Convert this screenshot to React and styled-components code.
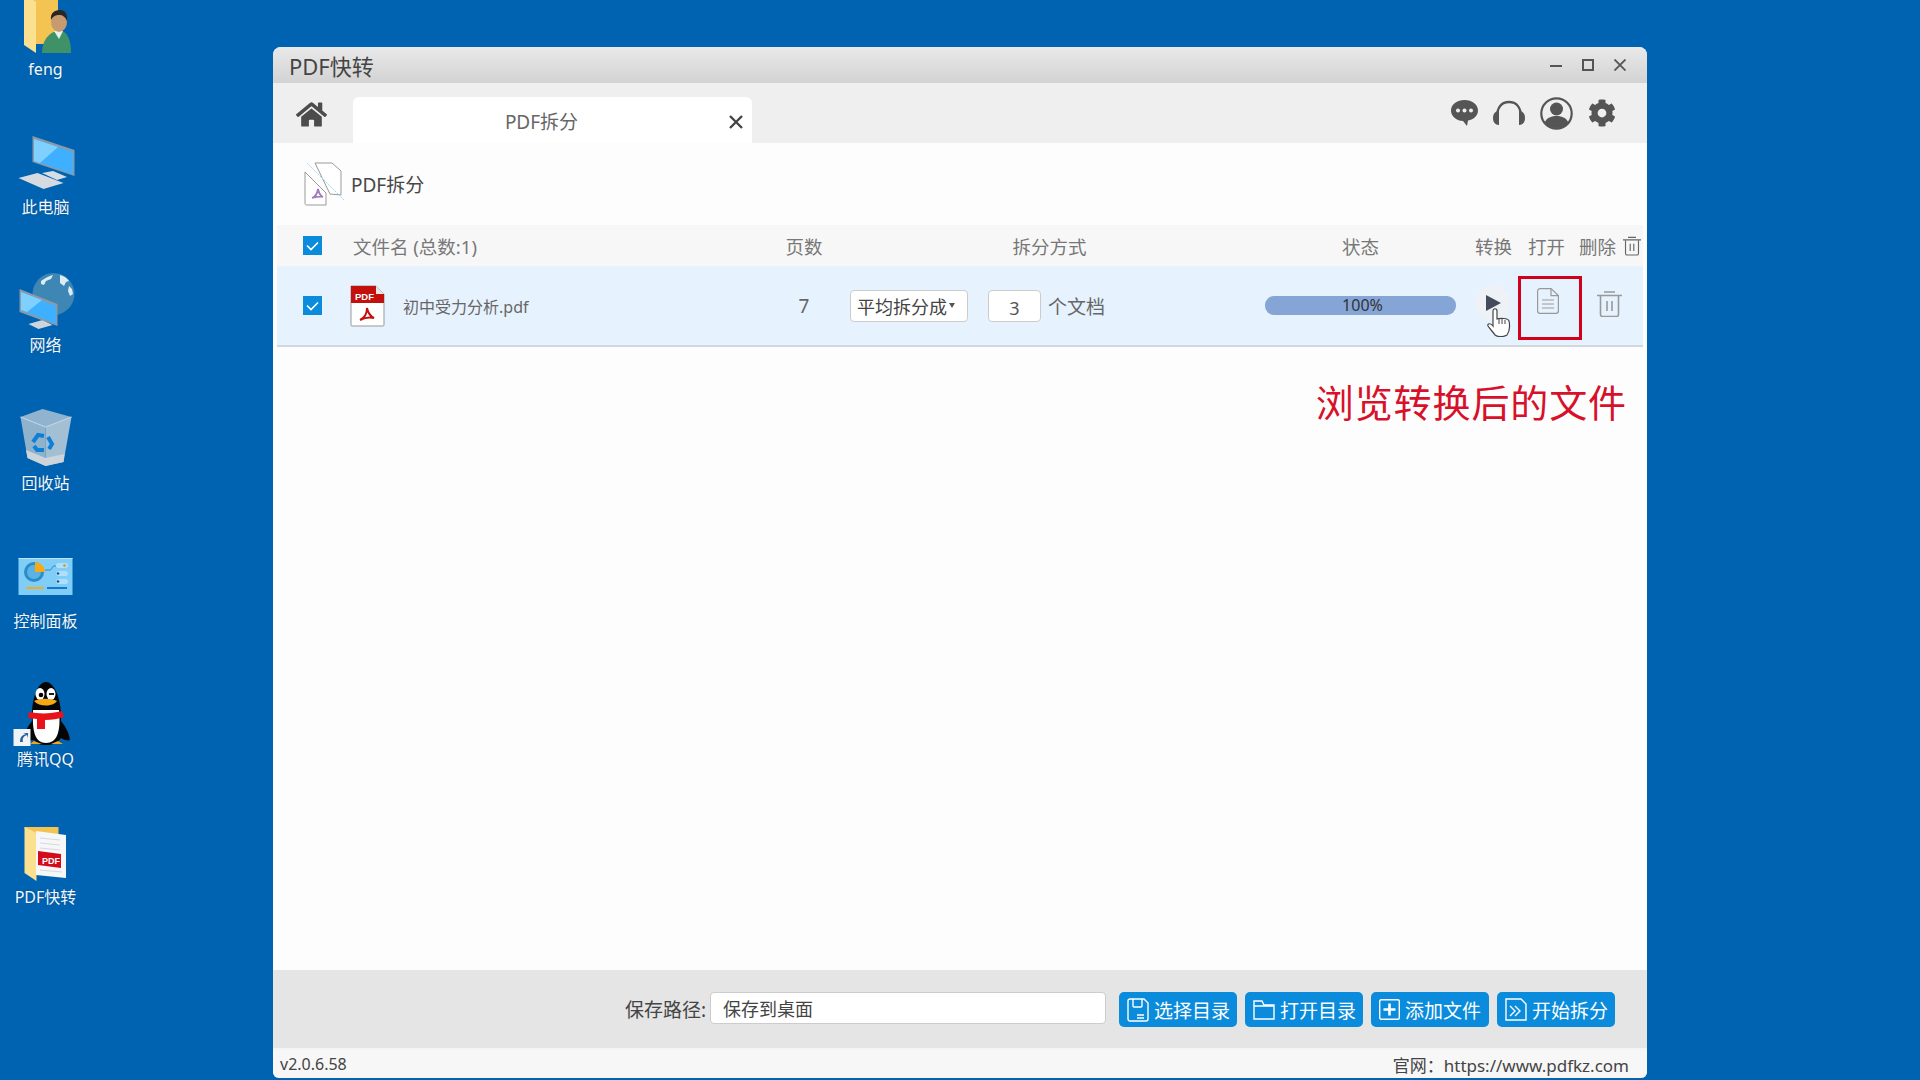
import React from 'react'
import styled, { createGlobalStyle } from 'styled-components'
import { FaHome, FaCog } from 'react-icons/fa'

const FONT = '"Noto Sans", "Noto Sans CJK SC", sans-serif'

const GlobalStyle = createGlobalStyle`
  html, body { margin: 0; padding: 0; }
  body { font-family: ${FONT}; background: #0063b1; }
  * { box-sizing: border-box; }
`

const Desktop = styled.div`
  display: flex;
  align-items: flex-start;
  width: 1920px;
  height: 1080px;
  overflow: hidden;
  background: #0063b1;
`
const IconColumn = styled.div`
  display: flex;
  flex-direction: column;
  flex: none;
  width: 91px;
  margin-top: -2px;
`
const DesktopItem = styled.div`
  display: flex;
  flex-direction: column;
  align-items: center;
  height: 138px;
  svg { display: block; overflow: visible; }
`
const DesktopLabel = styled.div`
  height: 22px;
  line-height: 22px;
  font-size: 16px;
  color: #f2f8ff;
  white-space: nowrap;
  text-shadow: 0 0 2px rgba(0, 0, 0, 0.25);
`

const Window = styled.div`
  display: flex;
  flex-direction: column;
  flex: none;
  width: 1374px;
  height: 1031px;
  margin: 47px 0 0 182px;
  border-radius: 8px 8px 6px 6px;
  overflow: hidden;
  background: #fdfdfe;
  box-shadow: inset 0 -1px 0 #5d86b5;
`
const TitleBar = styled.div`
  display: flex;
  align-items: center;
  justify-content: space-between;
  flex: none;
  height: 36px;
  padding: 0 21px 1px 16px;
  background: linear-gradient(#e9e9e9, #d3d3d3);
`
const TitleText = styled.div`
  font-size: 22px;
  color: #444;
`
const WinControls = styled.div`
  display: flex;
  align-items: center;
  gap: 20px;
  svg { display: block; }
`
const TabBar = styled.div`
  display: flex;
  align-items: flex-end;
  flex: none;
  height: 60px;
  padding-left: 25px;
  background: #efefef;
`
const HomeButton = styled.div`
  display: flex;
  align-items: center;
  width: 55px;
  height: 46px;
  margin-bottom: 6px;
  margin-left: -2px;
  margin-right: 2px;
  color: #4c4c4c;
  font-size: 31px;
`
const Tab = styled.div`
  position: relative;
  display: flex;
  align-items: center;
  justify-content: center;
  width: 399px;
  height: 46px;
  padding: 2px 22px 0 0;
  border-radius: 6px 6px 0 0;
  background: #fff;
  font-size: 19px;
  color: #666;
`
const TabClose = styled.svg`
  position: absolute;
  right: 9px;
  top: 18px;
`
const Tools = styled.div`
  display: flex;
  align-items: center;
  gap: 15px;
  height: 60px;
  margin-left: auto;
  margin-right: 31px;
  color: #555;
  svg { display: block; }
`
const Heading = styled.div`
  display: flex;
  align-items: center;
  flex: none;
  gap: 6px;
  height: 82px;
  padding: 0 0 0 31px;
  font-size: 19px;
  color: #484848;
`
const Table = styled.div`
  display: flex;
  flex-direction: column;
  flex: none;
  margin: 0 4px;
`
const TableRow = styled.div`
  display: grid;
  grid-template-columns: 76px 421px 60px 431px 191px 1fr;
  align-items: center;
  height: ${props => props.$height}px;
  background: ${props => props.$background};
  border-bottom: ${props => props.$line ? '2px solid #d3d8de' : 'none'};
`
const CheckCell = styled.div`
  display: flex;
  padding-left: 26px;
`
const HeadCell = styled.div`
  font-size: 18.5px;
  color: #777;
  text-align: ${props => props.$align || 'left'};
  white-space: nowrap;
`
const HeadActions = styled.div`
  display: flex;
  align-items: center;
  padding-left: 19px;
  font-size: 18.5px;
  color: #777;
`
const HeadAction = styled.span`
  flex: none;
  width: ${props => props.$width}px;
`
const NameCell = styled.div`
  display: flex;
  align-items: center;
  gap: 18px;
  padding-left: 0;
  margin-left: -3px;
  font-size: 16px;
  color: #666;
`
const PageCount = styled.div`
  font-size: 19px;
  color: #666;
  text-align: center;
`
const MethodCell = styled.div`
  display: flex;
  align-items: center;
  padding-left: 16px;
`
const SelectBox = styled.div`
  display: flex;
  align-items: center;
  width: 118px;
  height: 32px;
  padding-left: 6px;
  border: 1px solid #ccc;
  border-radius: 4px;
  background: #fff;
  font-size: 18px;
  color: #444;
  white-space: nowrap;
`
const Caret = styled.span`
  width: 0;
  height: 0;
  margin-left: 2px;
  border-left: 3px solid transparent;
  border-right: 3px solid transparent;
  border-top: 5px solid #555;
`
const CountInput = styled.div`
  width: 53px;
  height: 32px;
  margin-left: 20px;
  border: 1px solid #ccc;
  border-radius: 4px;
  background: #fff;
  font-size: 18px;
  line-height: 34px;
  text-align: center;
  color: #555;
`
const CountUnit = styled.span`
  margin-left: 7px;
  font-size: 19px;
  color: #666;
`
const Progress = styled.div`
  width: 191px;
  height: 19px;
  margin-top: -1px;
  padding-left: 4px;
  border-radius: 9px;
  background: #84a5d6;
  font-size: 16px;
  line-height: 18px;
  text-align: center;
  color: #333;
`
const RowActions = styled.div`
  display: flex;
  align-items: center;
  padding-left: 19px;
`
const PlayButton = styled.div`
  position: relative;
  display: flex;
  align-items: center;
  justify-content: center;
  flex: none;
  width: 36px;
  height: 36px;
  margin: -6px 7px 0 0;
  border-radius: 50%;
  background: #eef1f5;
`
const Pointer = styled.svg`
  position: absolute;
  left: 12px;
  top: 23px;
`
const OpenButton = styled.div`
  display: flex;
  justify-content: center;
  flex: none;
  width: 64px;
  height: 64px;
  margin-top: 5px;
  padding: 9px 5px 0 0;
  border: 3px solid #d0021b;
`
const TrashButton = styled.div`
  flex: none;
  margin: -3px 0 0 15px;
  svg { display: block; }
`
const Body = styled.div`
  flex: 1;
  padding: 28px 20px 0 0;
  font-size: 38px;
  line-height: 54px;
  text-align: right;
  letter-spacing: 0.9px;
  color: #d8112a;
`
const Footer = styled.div`
  display: flex;
  align-items: flex-start;
  justify-content: flex-end;
  flex: none;
  height: 80px;
  padding: 22px 32px 0 0;
  background: #e5e5e5;
  border-bottom: 2px solid #f4f4f4;
`
const PathLabel = styled.div`
  height: 32px;
  margin-right: 4px;
  font-size: 19px;
  line-height: 36px;
  color: #444;
  white-space: nowrap;
`
const PathInput = styled.div`
  width: 396px;
  height: 32px;
  margin-right: 13px;
  padding-left: 12px;
  border: 1px solid #ccc;
  border-radius: 4px;
  background: #fff;
  font-size: 18px;
  line-height: 32px;
  color: #444;
`
const ActionButton = styled.div`
  display: flex;
  align-items: center;
  gap: 5px;
  width: 118px;
  height: 35px;
  margin-left: ${props => props.$first ? 0 : 8}px;
  padding-left: 8px;
  border-radius: 5px;
  background: #0a8bdc;
  font-size: 19px;
  color: #fff;
  white-space: nowrap;
  svg { display: block; flex: none; }
`
const StatusBar = styled.div`
  display: flex;
  align-items: center;
  justify-content: space-between;
  flex: none;
  height: 28px;
  padding: 0 18px 0 7px;
  background: #f7f7f7;
  font-size: 16px;
  color: #444;
`
const SiteLink = styled.span`
  font-size: 17px;
`

const FengIcon = () => (
  <svg width="64" height="60" viewBox="0 0 64 60">
    <path d="M10 -4h34v50H22z" fill="#f3c452" />
    <path d="M10 -4l12 8v51l-12-8z" fill="#fbe08f" />
    <path d="M28 55c0-14 8-20 14-22h6c6 2 9 10 9 22z" fill="#3f9168" />
    <path d="M40 33l5 8 4-8z" fill="#e8f2ea" />
    <ellipse cx="45" cy="24" rx="8" ry="10" fill="#c89a70" />
    <path d="M37 22c-1-8 5-10 9-10s8 3 7 11c-2-5-5-6-8-6s-6 1-8 5z" fill="#2b2623" />
  </svg>
)
const ComputerIcon = () => (
  <svg width="64" height="60" viewBox="0 0 64 60">
    <polygon points="28,37 39,35 53,41 43,44" fill="#d6dde3" />
    <polygon points="18.5,0 60.5,14 60.5,40 18.5,26" fill="#8a9aa8" />
    <polygon points="20,3 59,16 59,38 20,25" fill="#3fb0ff" />
    <polygon points="20,3 44,11 26,27 20,25" fill="#7fd0ff" />
    <polygon points="4.5,42 23.5,37 49.5,47 29.5,53" fill="#d5dbe0" />
  </svg>
)
const NetworkIcon = () => (
  <svg width="64" height="60" viewBox="0 0 64 60">
    <circle cx="39.5" cy="20" r="21" fill="#3e86b4" />
    <path d="M27 7c4-3 8-5 12-6l-2 4-5 2-2 4-3-1zM46 1c4 1 7 3 9 6l-3 1-2 4-4-3zM55 12l3 3 1 5-3 2-2-5z" fill="#dcecf6" />
    <polygon points="14.5,50 28.5,46 38.5,51 24.5,55" fill="#ccd5dc" />
    <polygon points="5.5,15 43.5,30 43.5,52 5.5,38" fill="#8a9aa8" />
    <polygon points="7,18 42,32 42,50 7,36" fill="#3fb0ff" />
    <polygon points="7,18 28,26 13,38 7,36" fill="#7fd0ff" />
  </svg>
)
const RecycleIcon = () => (
  <svg width="64" height="60" viewBox="0 0 64 60">
    <polygon points="6.5,5 28.5,-3 57.5,5 31.5,15" fill="#90b4d0" />
    <polygon points="6.5,5 31.5,15 31.5,54 13.5,46" fill="#8fb2cd" />
    <polygon points="57.5,5 31.5,15 31.5,54 49.5,50" fill="#a3bfd4" />
    <polygon points="12,38 31.5,46 50.5,42 49.5,50 31.5,54 13.5,46" fill="#cdd4da" />
    <path d="M6.5 5L31.5 15L57.5 5" fill="none" stroke="#c9dcea" strokeWidth="1" />
    <g fill="none" stroke="#0f7fd6" strokeWidth="4">
      <path d="M19 30l5-7 6 1" />
      <path d="M34 25l4 7-3 5" />
      <path d="M30 38h-7l-3-4" />
    </g>
  </svg>
)
const PanelIcon = () => (
  <svg width="64" height="60" viewBox="0 0 64 60">
    <rect x="4.5" y="8" width="54" height="37" fill="#80cdf8" />
    <rect x="4.5" y="8" width="54" height="1" fill="#b7e4fc" />
    <circle cx="20" cy="22" r="10" fill="#2b8cc8" />
    <circle cx="20" cy="22" r="7" fill="#5cb2e4" />
    <path d="M21 12a10 10 0 0 1 10 10H21z" fill="#f6ab14" />
    <path d="M31 20h5c2 0 2-4 4-4h4" fill="none" stroke="#2b8cc8" strokeWidth="1" />
    <rect x="42" y="13" width="12" height="5" rx="2.5" fill="#aee0fb" />
    <rect x="42" y="21" width="12" height="5" rx="2.5" fill="#aee0fb" />
    <rect x="42" y="29" width="12" height="5" rx="2.5" fill="#aee0fb" />
    <circle cx="50.5" cy="15.5" r="1.3" fill="#e98a1c" />
    <circle cx="44" cy="23.5" r="1.3" fill="#12588f" />
    <circle cx="44" cy="31.5" r="1.3" fill="#12588f" />
    <rect x="12" y="37" width="18" height="2" fill="#f0ad1e" />
    <rect x="33" y="37" width="20" height="2" fill="#1278c8" />
  </svg>
)
const QQIcon = () => (
  <svg width="64" height="60" viewBox="0 0 64 60">
    <path d="M20 52c-5 1-9 0-10-1 1-8 4-13 8-18-1-20 5-39 14-39s16 19 15 39c4 5 8 11 9 19-2 1-6 0-9-2-4 6-9 7-15 7s-9-1-12-5z" fill="#050505" />
    <path d="M19 22c-1 22 2 33 13 33s15-11 13-33z" fill="#fff" />
    <path d="M20 53l-4 3h12zM44 53l5 3H37z" fill="#f2a614" />
    <ellipse cx="26" cy="6" rx="4.5" ry="6" fill="#fff" />
    <ellipse cx="37" cy="6" rx="4.5" ry="6" fill="#fff" />
    <circle cx="27" cy="7" r="2.3" fill="#000" />
    <path d="M35 6h5" stroke="#000" strokeWidth="1.8" />
    <path d="M20 13c6-3 17-3 23 0-4 6-18 6-23 0z" fill="#f4a914" />
    <path d="M15 24c10 2 22 2 33-1l2 6c-6 2-12 3-19 3v9h-8v-10l-9-1z" fill="#e8121a" />
    <rect x="-0.5" y="41" width="17" height="17" fill="#eef3f8" />
    <path d="M6 54c0-5 2-7 6-8l-3-1h5v5l-1-3c-3 1-5 3-4 7z" fill="#2a5e9e" />
  </svg>
)
const PdfFolderIcon = () => (
  <svg width="64" height="60" viewBox="0 0 64 60">
    <path d="M10.5 1h34v44h-26z" fill="#f3c452" />
    <path d="M10.5 1l12 6v48l-12-8z" fill="#fbe08f" />
    <polygon points="22,5 52,9 52,52 22,49" fill="#f6f7f8" />
    <g stroke="#d6d9dc" strokeWidth="1">
      <path d="M26 12l20 2M26 17l20 2M26 22l20 2M26 44l22 2" />
    </g>
    <polygon points="24,25 47,28 47,42 24,39" fill="#d40b1c" />
    <text x="28" y="38" fontFamily="Liberation Sans, sans-serif" fontSize="9" fontWeight="700" fill="#fff">PDF</text>
  </svg>
)

const desktopItems = [
  { label: 'feng', Icon: FengIcon },
  { label: '此电脑', Icon: ComputerIcon },
  { label: '网络', Icon: NetworkIcon },
  { label: '回收站', Icon: RecycleIcon },
  { label: '控制面板', Icon: PanelIcon },
  { label: '腾讯QQ', Icon: QQIcon },
  { label: 'PDF快转', Icon: PdfFolderIcon },
]

const CheckBox = () => (
  <svg width="19" height="19" viewBox="0 0 19 19">
    <rect width="19" height="19" fill="#0a8bdc" />
    <path d="M4 9.500l4 4 7-7" fill="none" stroke="#fff" strokeWidth="1.600" />
  </svg>
)
const ChatIcon = () => (
  <svg width="27" height="28" viewBox="0 0 27 28">
    <path d="M13.500 1C6 1 0 5.500 0 11.500S6 22 12 22l4 5 1-5.600c6-1 10-4.900 10-9.900C27 5.500 21 1 13.500 1z" fill="#555" />
    <circle cx="7" cy="11.500" r="2" fill="#efefef" />
    <circle cx="13.500" cy="11.500" r="2" fill="#efefef" />
    <circle cx="20" cy="11.500" r="2" fill="#efefef" />
  </svg>
)
const HeadsetIcon = () => (
  <svg width="32" height="26" viewBox="0 0 32 26">
    <path d="M4 17C4 7 9 2 16 2s12 5 12 15" fill="none" stroke="#555" strokeWidth="2.400" />
    <path d="M6 11v14C2 25 0 22 0 18s2-7 6-7zM26 11v14c4 0 6-3 6-7s-2-7-6-7z" fill="#555" />
  </svg>
)
const UserIcon = () => (
  <svg width="33" height="33" viewBox="0 0 33 33">
    <circle cx="16.500" cy="16.500" r="15.200" fill="#efefef" stroke="#555" strokeWidth="2.200" />
    <circle cx="16.500" cy="12" r="6.500" fill="#555" />
    <path d="M4.500 26c2-5 6-7 12-7s10 2 12 7c-3 3-7 5-12 5s-9-2-12-5z" fill="#555" />
  </svg>
)
const SplitIcon = () => (
  <svg width="41" height="44" viewBox="0 0 41 44">
    <path d="M11 1h17l9 8v24l-11-1z" fill="#fff" stroke="#999" strokeWidth="1" />
    <path d="M1 10l21 21v12H2.500A1.500 1.500 0 0 1 1 41.500z" fill="#fff" stroke="#999" strokeWidth="1" />
    <path d="M3 1l37 37" stroke="#9ed8ee" strokeWidth="1" strokeDasharray="2 1" />
    <path d="M14 27c-1 6-3 8-6 9 4-1 8-2 11-1-3-1-4-4-5-8z" fill="none" stroke="#a17ac0" strokeWidth="1.800" />
  </svg>
)
const PdfFileIcon = () => (
  <svg width="35" height="42" viewBox="0 0 35 42">
    <path d="M1 1h25l8 8v31a1 1 0 0 1-1 1H2a1 1 0 0 1-1-1z" fill="#fff" stroke="#999" />
    <path d="M1 1h25v8h8v9H1z" fill="#c3100d" />
    <path d="M26 1l8 8h-8z" fill="#e5e5e5" />
    <text x="5" y="15" fontFamily="Liberation Sans, sans-serif" fontSize="9.500" fontWeight="700" fill="#fff">PDF</text>
    <path d="M17 23c0 6-3 10-7 12 4-2 9-3 14-2-4-2-6-5-7-10z" fill="none" stroke="#c3100d" strokeWidth="2" />
  </svg>
)
const DocIcon = () => (
  <svg width="22" height="26" viewBox="0 0 22 26">
    <path d="M3 .6h11l7.400 7V23a2.400 2.400 0 0 1-2.400 2.400H3A2.400 2.400 0 0 1 .6 23V3A2.400 2.400 0 0 1 3 .6z" fill="none" stroke="#999" strokeWidth="1.200" />
    <path d="M14 .6v7h7.400M5 12h12M5 16h12M5 20h12" fill="none" stroke="#999" strokeWidth="1.200" />
  </svg>
)
const TrashIcon = ({ width, height, color }) => (
  <svg width={width} height={height} viewBox="0 0 25 26">
    <path d="M0 4.500h25M7 1h11" stroke={color} strokeWidth="1.600" fill="none" />
    <path d="M3.500 5v18.500a2 2 0 0 0 2 2h14a2 2 0 0 0 2-2V5M10 10v10M15 10v10" stroke={color} strokeWidth="1.600" fill="none" />
  </svg>
)
const SaveIcon = () => (
  <svg width="22" height="24" viewBox="0 0 22 24">
    <path d="M1 3a2 2 0 0 1 2-2h14l4 4v16a2 2 0 0 1-2 2H3a2 2 0 0 1-2-2z" fill="none" stroke="#fff" strokeWidth="1.400" />
    <path d="M6 1v7a1 1 0 0 0 1 1h7a1 1 0 0 0 1-1V1M10 17h7M10 20h7" fill="none" stroke="#fff" strokeWidth="1.400" />
  </svg>
)
const FolderIcon = () => (
  <svg width="22" height="20" viewBox="0 0 22 20">
    <path d="M1 1h8l2 4h10v14H1zM1 6h20" fill="none" stroke="#fff" strokeWidth="1.400" />
  </svg>
)
const AddIcon = () => (
  <svg width="21" height="21" viewBox="0 0 21 21">
    <rect x=".7" y=".7" width="19.600" height="19.600" rx="1.500" fill="none" stroke="#fff" strokeWidth="1.400" />
    <path d="M10.500 4.500v12M4.500 10.500h12" stroke="#fff" strokeWidth="2.600" />
  </svg>
)
const StartIcon = () => (
  <svg width="22" height="23" viewBox="0 0 22 23">
    <path d="M1 1h15l5 5v16H1z" fill="none" stroke="#fff" strokeWidth="1.400" />
    <path d="M5 8l5 5-5 5M10 8l5 5-5 5" fill="none" stroke="#fff" strokeWidth="1.400" />
  </svg>
)

const footerButtons = [
  { label: '选择目录', Icon: SaveIcon },
  { label: '打开目录', Icon: FolderIcon },
  { label: '添加文件', Icon: AddIcon },
  { label: '开始拆分', Icon: StartIcon },
]

export default function App() {
  return (
    <>
      <GlobalStyle />
      <Desktop>
        <IconColumn>
          {desktopItems.map(({ label, Icon }) => (
            <DesktopItem key={label}>
              <Icon />
              <DesktopLabel>{label}</DesktopLabel>
            </DesktopItem>
          ))}
        </IconColumn>
        <Window>
          <TitleBar>
            <TitleText>PDF快转</TitleText>
            <WinControls>
              <svg width="12" height="12" viewBox="0 0 12 12"><path d="M0 7h12" stroke="#555" strokeWidth="2" /></svg>
              <svg width="12" height="12" viewBox="0 0 12 12"><rect x="1" y="1" width="10" height="10" fill="none" stroke="#555" strokeWidth="2" /></svg>
              <svg width="12" height="12" viewBox="0 0 12 12"><path d="M.5.5l11 11M11.500.5l-11 11" stroke="#555" strokeWidth="1.800" /></svg>
            </WinControls>
          </TitleBar>
          <TabBar>
            <HomeButton><FaHome /></HomeButton>
            <Tab>
              PDF拆分
              <TabClose width="14" height="14" viewBox="0 0 14 14">
                <path d="M1 1l12 12M13 1L1 13" stroke="#444" strokeWidth="2.400" />
              </TabClose>
            </Tab>
            <Tools>
              <ChatIcon />
              <HeadsetIcon />
              <UserIcon />
              <FaCog size={28} />
            </Tools>
          </TabBar>
          <Heading>
            <SplitIcon />
            PDF拆分
          </Heading>
          <Table>
            <TableRow $height={41} $background="#f7f7f7">
              <CheckCell><CheckBox /></CheckCell>
              <HeadCell>文件名 (总数:1)</HeadCell>
              <HeadCell $align="center">页数</HeadCell>
              <HeadCell $align="center">拆分方式</HeadCell>
              <HeadCell $align="center">状态</HeadCell>
              <HeadActions>
                <HeadAction $width={53}>转换</HeadAction>
                <HeadAction $width={51}>打开</HeadAction>
                <HeadAction $width={44}>删除</HeadAction>
                <TrashIcon width={18} height={20} color="#666" />
              </HeadActions>
            </TableRow>
            <TableRow $height={81} $background="#e6f2fd" $line>
              <CheckCell><CheckBox /></CheckCell>
              <NameCell>
                <PdfFileIcon />
                初中受力分析.pdf
              </NameCell>
              <PageCount>7</PageCount>
              <MethodCell>
                <SelectBox>平均拆分成<Caret /></SelectBox>
                <CountInput>3</CountInput>
                <CountUnit>个文档</CountUnit>
              </MethodCell>
              <Progress>100%</Progress>
              <RowActions>
                <PlayButton>
                  <svg width="15" height="16" viewBox="0 0 15 16"><path d="M0 0l15 8-15 8z" fill="#444c5c" /></svg>
                  <Pointer width="24" height="29" viewBox="0 0 24 29">
                    <path d="M6 18V3c0-3 4-3 4 0v8c3-1 11-1 12 2 1 5 1 10-2 14-4 2-9 2-12 0-2-3-5-6-7-9-1-3 3-3 5 0z" fill="#fff" stroke="#444" strokeWidth="1.200" />
                    <path d="M12 11v5M15 11v5M18 12v4" stroke="#444" strokeWidth="1" />
                  </Pointer>
                </PlayButton>
                <OpenButton><DocIcon /></OpenButton>
                <TrashButton><TrashIcon width={25} height={26} color="#999" /></TrashButton>
              </RowActions>
            </TableRow>
          </Table>
          <Body>浏览转换后的文件</Body>
          <Footer>
            <PathLabel>保存路径:</PathLabel>
            <PathInput>保存到桌面</PathInput>
            {footerButtons.map(({ label, Icon }, index) => (
              <ActionButton key={label} $first={index === 0}>
                <Icon />
                {label}
              </ActionButton>
            ))}
          </Footer>
          <StatusBar>
            <span>v2.0.6.58</span>
            <SiteLink>官网：https://www.pdfkz.com</SiteLink>
          </StatusBar>
        </Window>
      </Desktop>
    </>
  )
}
